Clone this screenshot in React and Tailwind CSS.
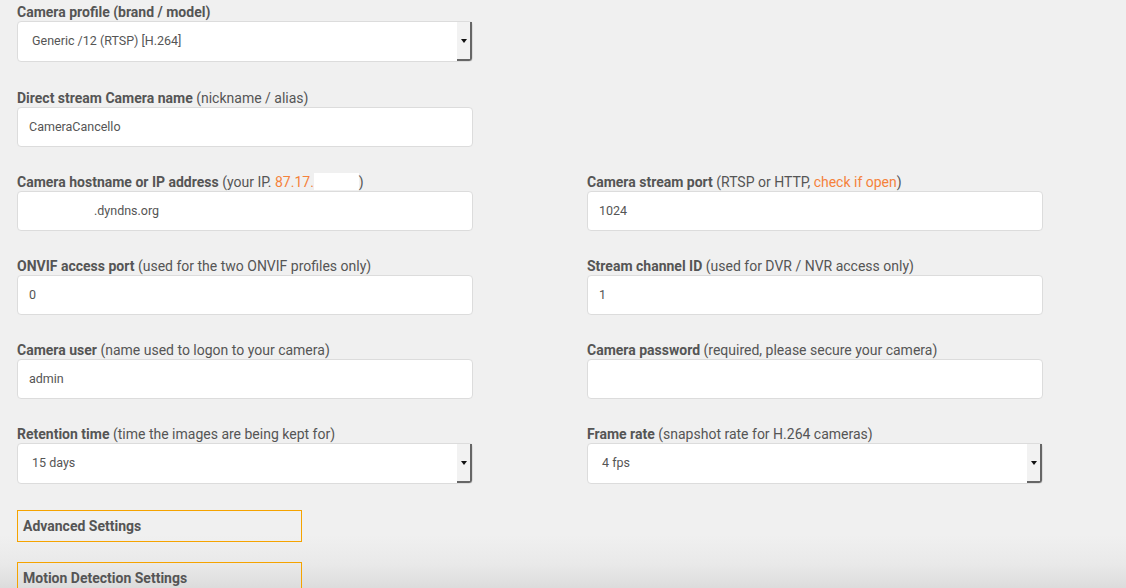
import React from "react";

const Label = ({ title, note, children }) => (
  <div className="h-[18px] leading-[18px] text-[14px] text-[#555] whitespace-nowrap">
    <span className="font-bold">{title}</span>
    {note && <span> {note}</span>}
    {children}
  </div>
);

const TextBox = ({ value, pad = "pl-[11px]" }) => (
  <div
    className={`h-[40px] w-[456px] bg-white border border-[#dcdcdc] rounded-[4px] flex items-center ${pad} text-[12.5px] text-[#555]`}
  >
    {value}
  </div>
);

const SelectBox = ({ value }) => (
  <div className="h-[41px] w-[456px] bg-white border border-[#dcdcdc] rounded-[4px] flex items-stretch text-[12.5px] text-[#555]">
    <div className="flex-1 flex items-center pl-[14px]">{value}</div>
    <div className="w-[15px] bg-[#f2f2f2] border-r-2 border-b-2 border-[#666] rounded-br-[3px] flex items-center justify-center">
      <svg width="6" height="4" viewBox="0 0 6 4">
        <path d="M0 0 L6 0 L3 4 Z" fill="#111" />
      </svg>
    </div>
  </div>
);

const Field = ({ label, children, className = "mb-[26px]" }) => (
  <div className={className}>
    {label}
    {children}
  </div>
);

const Empty = () => <div />;

export default function App() {
  return (
    <div
      className="h-[588px] w-[1126px] overflow-hidden bg-[linear-gradient(to_bottom,#f0f0f0_0%,#f0f0f0_91%,#e9e9e9_96%,#dcdcdc_100%)] pl-[17px] pt-[3px]"
      style={{ fontFamily: "Roboto, 'Liberation Sans', sans-serif" }}
    >
      <div className="grid grid-cols-[456px_456px] gap-x-[114px]">
        <Field
          className="mb-[27px]"
          label={<Label title="Camera profile (brand / model)" />}
        >
          <SelectBox value="Generic /12 (RTSP) [H.264]" />
        </Field>
        <Empty />

        <Field
          label={<Label title="Direct stream Camera name" note="(nickname / alias)" />}
        >
          <TextBox value="CameraCancello" />
        </Field>
        <Empty />

        <Field
          label={
            <Label title="Camera hostname or IP address">
              <span> (your IP. </span>
              <span className="text-[#f5823b]">87.17.</span>
              <span className="inline-block w-[45px] h-[17px] bg-white align-[-3px]" />
              <span>)</span>
            </Label>
          }
        >
          <TextBox value=".dyndns.org" pad="pl-[76px]" />
        </Field>
        <Field
          label={
            <Label title="Camera stream port">
              <span> (RTSP or HTTP, </span>
              <span className="text-[#f5823b]">check if open</span>
              <span>)</span>
            </Label>
          }
        >
          <TextBox value="1024" />
        </Field>

        <Field
          label={
            <Label
              title="ONVIF access port"
              note="(used for the two ONVIF profiles only)"
            />
          }
        >
          <TextBox value="0" />
        </Field>
        <Field
          label={
            <Label
              title="Stream channel ID"
              note="(used for DVR / NVR access only)"
            />
          }
        >
          <TextBox value="1" />
        </Field>

        <Field
          label={
            <Label
              title="Camera user"
              note="(name used to logon to your camera)"
            />
          }
        >
          <TextBox value="admin" />
        </Field>
        <Field
          label={
            <Label
              title="Camera password"
              note="(required, please secure your camera)"
            />
          }
        >
          <TextBox value="" />
        </Field>

        <Field
          label={
            <Label
              title="Retention time"
              note="(time the images are being kept for)"
            />
          }
        >
          <SelectBox value="15 days" />
        </Field>
        <Field
          label={
            <Label
              title="Frame rate"
              note="(snapshot rate for H.264 cameras)"
            />
          }
        >
          <SelectBox value="4 fps" />
        </Field>
      </div>

      <div className="w-[285px] h-[32px] border border-solid border-[#f5a300] flex items-center pl-[5px] text-[14px] font-bold text-[#555] mb-[20px]">
        Advanced Settings
      </div>
      <div className="w-[285px] h-[32px] border border-solid border-[#f5a300] flex items-center pl-[5px] text-[14px] font-bold text-[#555]">
        Motion Detection Settings
      </div>
    </div>
  );
}
